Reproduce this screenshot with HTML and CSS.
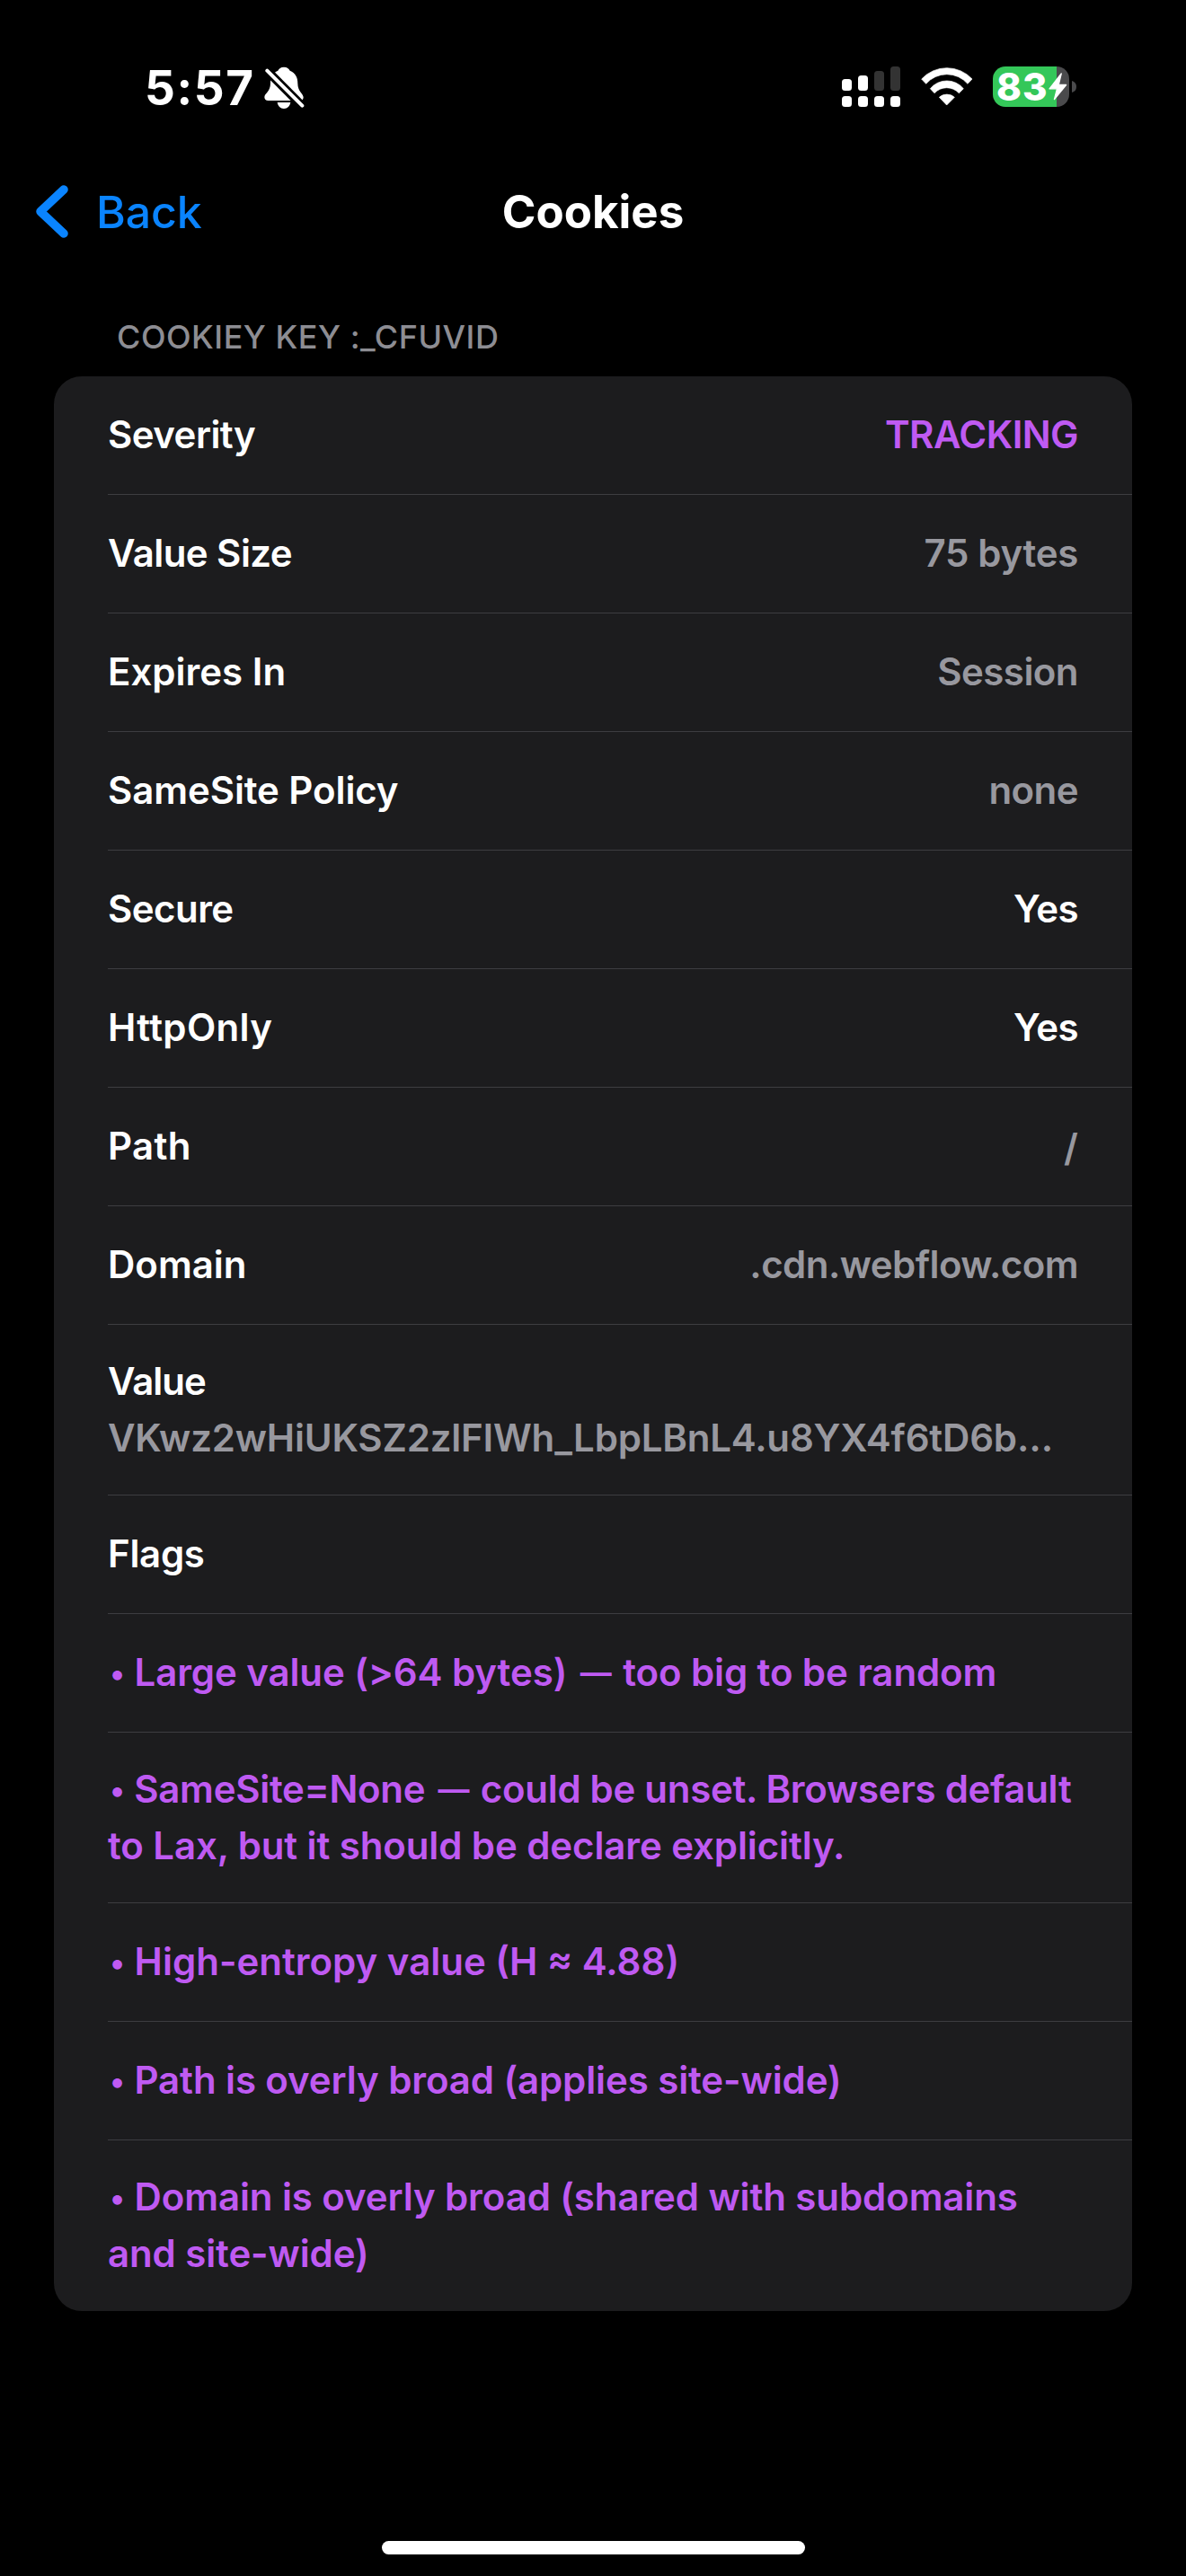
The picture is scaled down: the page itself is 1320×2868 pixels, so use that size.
FILE: index.html
```html
<!DOCTYPE html>
<html lang="en">
<head>
<meta charset="utf-8">
<title>Cookies</title>
<link rel="stylesheet" href="styles.css">
</head>
<body>
<div class="screen">
  <header class="status">
    <div class="status-left">
      <span class="time">5:57</span>
      <svg class="bell" viewBox="462 72 135 144" aria-hidden="true">
        <path fill="#fff" d="M528 74c11 0 17 6 20 12 18 7 26 22 26 42 0 28 19 34 19 47 0 7-4 11-11 11H475c-7 0-12-4-12-11 0-14 20-18 20-47 0-20 8-35 25-42 3-6 9-12 20-12zM506 192h44c-2 12-10 21-22 21s-20-9-22-21z"/>
        <path stroke="#000" stroke-width="29" d="M466 80l128 129"/>
        <path stroke="#fff" stroke-width="12" stroke-linecap="round" d="M472 86l117 117"/>
      </svg>
    </div>
    <div class="status-right">
      <svg class="signal" viewBox="0 0 66 45" aria-hidden="true">
        <g fill="#fff"><rect x="0" y="14" width="11" height="13" rx="3.5"/><rect x="18" y="10" width="11" height="17" rx="3.5"/>
        <rect x="0" y="33" width="11" height="12" rx="3.5"/><rect x="18" y="33" width="11" height="12" rx="3.5"/><rect x="36" y="33" width="11" height="12" rx="3.5"/><rect x="54" y="33" width="11" height="12" rx="3.5"/></g>
        <g fill="#333"><rect x="36" y="5" width="11" height="22" rx="3.5"/><rect x="54" y="0" width="11" height="27" rx="3.5"/></g>
      </svg>
      <svg class="wifi" viewBox="344 74 174 129" aria-hidden="true">
        <g fill="#fff" stroke="#fff" stroke-width="2" stroke-linejoin="round">
          <path d="M346 113A115 115 0 0 1 515 113L500 129A92 92 0 0 0 361 129Z"/>
          <path d="M375 145A72 72 0 0 1 486 145L471 160A56 56 0 0 0 389 160Z"/>
          <path d="M405 174A38 38 0 0 1 456 174L430 200Z"/>
        </g>
      </svg>
      <div class="battery">
        <div class="battery-body">
          <span class="battery-level">83</span>
          <svg class="bolt" viewBox="772 94 62 92" aria-hidden="true"><path fill="#fff" stroke="#fff" stroke-width="4" stroke-linejoin="round" d="M814 97L775 147H800L791 182L830 134H805Z"/></svg>
        </div>
        <svg class="battery-cap" viewBox="0 0 5 13" aria-hidden="true"><path fill="#4a4a4c" d="M0 0Q5 1.5 5 6.500T0 13Z"/></svg>
      </div>
    </div>
  </header>

  <nav class="navbar">
    <a class="back">
      <svg class="chevron" viewBox="0 0 36 59" aria-hidden="true"><path fill="none" stroke="#0a84ff" stroke-width="9.500" stroke-linecap="round" stroke-linejoin="round" d="M31 5L5 29.500L31 54"/></svg>
      <span>Back</span>
    </a>
    <h1 class="title">Cookies</h1>
  </nav>

  <main class="content">
    <h2 class="section">COOKIEY KEY :_CFUVID</h2>
    <div class="card">
      <div class="row"><span class="tight">Severity</span><span class="purple tight">TRACKING</span></div>
      <div class="row"><span class="tight">Value Size</span><span class="muted snug">75 bytes</span></div>
      <div class="row"><span>Expires In</span><span class="muted tight">Session</span></div>
      <div class="row"><span class="close">SameSite Policy</span><span class="muted tight">none</span></div>
      <div class="row"><span class="tight">Secure</span><span class="tight">Yes</span></div>
      <div class="row"><span class="wide">HttpOnly</span><span class="tight">Yes</span></div>
      <div class="row"><span class="wide">Path</span><span class="muted slash">/</span></div>
      <div class="row"><span>Domain</span><span class="muted tight">.cdn.webflow.com</span></div>
      <div class="row tall"><span class="tightest">Value</span><span class="muted string">VKwz2wHiUKSZ2zlFIWh_LbpLBnL4.u8YX4f6tD6b…</span></div>
      <div class="row"><span class="snug">Flags</span></div>
      <div class="row purple"><p class="close"><span class="dot">•</span> Large value (&gt;64 bytes) <span class="dash">—</span> too big to be random</p></div>
      <div class="row tall purple"><p class="snug"><span class="dot">•</span> SameSite=None <span class="dash">—</span> could be unset. Browsers default</p><p class="close">to Lax, but it should be declare explicitly.</p></div>
      <div class="row purple"><p><span class="dot">•</span> High-entropy value (H ≈ 4.88)</p></div>
      <div class="row purple"><p class="close"><span class="dot">•</span> Path is overly broad (applies site-wide)</p></div>
      <div class="row tall purple"><p class="close"><span class="dot">•</span> Domain is overly broad (shared with subdomains</p><p class="close">and site-wide)</p></div>
    </div>
  </main>

  <div class="home-indicator"></div>
</div>
</body>
</html>
```
FILE: styles.css
```css
* { box-sizing: border-box; margin: 0; }

body {
  background: #000;
  color: #fff;
  font-family: Inter, "Liberation Sans", sans-serif;
}

.screen {
  display: flex;
  flex-direction: column;
  width: 1320px;
  height: 2868px;
}

svg { display: block; flex: none; }

/* Status bar */
.status {
  display: flex;
  justify-content: space-between;
  height: 186px;
  padding: 74px 122px 0 161px;
}
.status-left, .status-right { display: flex; align-items: flex-start; }
.time {
  width: 133px;
  font-size: 53px;
  font-weight: 700;
  line-height: 48px;
  letter-spacing: 1.6px;
}
.bell { width: 45px; height: 48px; }
.signal { width: 66px; height: 45px; margin-right: 22px; }
.wifi { width: 58px; height: 43px; margin: 1px 22px 0 0; }
.battery { display: flex; align-items: center; gap: 3px; }
.battery-body {
  display: flex;
  align-items: center;
  width: 85px;
  height: 45px;
  padding-left: 4px;
  border-radius: 14px;
  background: linear-gradient(90deg, #34c759 71px, #4a4a4c 71px);
}
.battery-level {
  width: 58px;
  font-size: 42px;
  font-weight: 800;
  line-height: 45px;
  letter-spacing: 1px;
}
.bolt { width: 21px; height: 31px; }
.battery-cap { width: 5px; height: 13px; }

/* Navigation bar */
.navbar {
  display: grid;
  grid-template-columns: 1fr auto 1fr;
  align-items: center;
  height: 99px;
  padding: 0 40px;
}
.back {
  display: flex;
  align-items: center;
  gap: 31px;
  color: #0a84ff;
  font-size: 50px;
  font-weight: 500;
  line-height: 60px;
  letter-spacing: -0.1px;
}
.chevron { width: 36px; height: 59px; }
.title {
  font-size: 51px;
  font-weight: 700;
  line-height: 60px;
}

/* Grouped list */
.content { padding: 66px 60px 0; }
.section {
  height: 68px;
  padding-left: 70px;
  color: #8d8d93;
  font-size: 36px;
  font-weight: 500;
  line-height: 48px;
  letter-spacing: 0.5px;
}
.card {
  overflow: hidden;
  border-radius: 31px;
  background: #1c1c1e;
}
.row {
  display: flex;
  justify-content: space-between;
  margin-left: 60px;
  padding: 33px 60px 35px 0;
  border-bottom: 1px solid #3d3d41;
  font-size: 42px;
  font-weight: 600;
  line-height: 63px;
  white-space: nowrap;
}
.row:last-child { border-bottom: 0; }
.tall { flex-direction: column; padding: 31px 0 32px; }
.row:last-child.tall { padding-bottom: 33px; }
.muted { color: #98989f; }
.purple { color: #bf5af2; }
.dot {
  display: inline-block;
  width: 19px;
  padding-left: 2px;
  font-size: 34px;
  line-height: 1;
  vertical-align: 2px;
}
.dash {
  display: inline-block;
  width: 41px;
  padding-left: 4px;
  font-size: 35px;
  line-height: 1;
  vertical-align: 2px;
}
.slash { line-height: 67px; margin-bottom: -4px; }

/* Optical tracking */
.tightest { letter-spacing: -1px; }
.tight { letter-spacing: -0.55px; }
.snug { letter-spacing: -0.3px; }
.string { letter-spacing: -0.19px; }
.close { letter-spacing: -0.1px; }
.wide { letter-spacing: 0.35px; }

.home-indicator {
  width: 471px;
  height: 15px;
  margin: auto 0 24px 425px;
  border-radius: 8px;
  background: #fff;
}
```
